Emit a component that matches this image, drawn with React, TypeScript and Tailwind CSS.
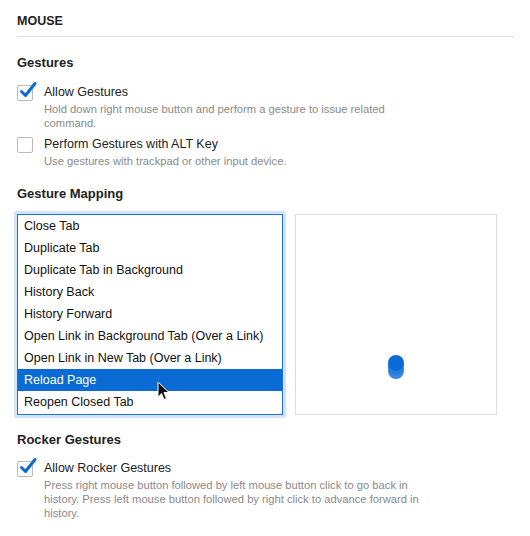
import React from "react";

const mappings = [
  "Close Tab",
  "Duplicate Tab",
  "Duplicate Tab in Background",
  "History Back",
  "History Forward",
  "Open Link in Background Tab (Over a Link)",
  "Open Link in New Tab (Over a Link)",
  "Reload Page",
  "Reopen Closed Tab",
];

function Check({ checked }: { checked: boolean }) {
  return (
    <div className="relative h-4 w-4 shrink-0 rounded-[2px] border border-[#b9b9b9] bg-white">
      {checked && (
        <svg
          className="absolute -top-[5px] left-[1px]"
          width="18"
          height="18"
          viewBox="0 0 18 18"
        >
          <path
            d="M2.5 10.5 L6.5 14.5 L16 2.5"
            fill="none"
            stroke="#0b6bd6"
            strokeWidth="3"
            strokeLinecap="round"
            strokeLinejoin="round"
          />
        </svg>
      )}
    </div>
  );
}

function Option({
  checked,
  label,
  desc,
}: {
  checked: boolean;
  label: string;
  desc: string;
}) {
  return (
    <div className="flex gap-[11px]">
      <div className="pt-[1px]">
        <Check checked={checked} />
      </div>
      <div className="flex flex-col">
        <div className="text-[12.5px] leading-[17px] text-[#222]">{label}</div>
        <div className="mt-[1px] max-w-[385px] text-[11.2px] leading-[14px] text-[#8a8a8a]">
          {desc}
        </div>
      </div>
    </div>
  );
}

export default function App() {
  return (
    <div
      className="min-h-screen bg-white px-[17px] pt-[13px] text-[#222]"
      style={{ fontFamily: '"Liberation Sans", Arial, sans-serif' }}
    >
      <div className="w-[497px] border-b border-[#dedede] pb-[7px] text-[12.5px] font-bold leading-[16px]">
        MOUSE
      </div>

      <div className="mt-[17px] text-[13px] font-semibold leading-[18px]">Gestures</div>
      <div className="mt-[12px] flex flex-col gap-[6px]">
        <Option
          checked
          label="Allow Gestures"
          desc="Hold down right mouse button and perform a gesture to issue related command."
        />
        <Option
          checked={false}
          label="Perform Gestures with ALT Key"
          desc="Use gestures with trackpad or other input device."
        />
      </div>

      <div className="mt-[17px] text-[13px] font-semibold leading-[18px]">Gesture Mapping</div>
      <div className="mt-[8px] flex items-start gap-[9px]">
        <div className="ml-[-3px] rounded-[2px] bg-[#d3e3f8] p-[3px]">
          <div className="relative w-[266px] border border-[#1a73e0] bg-white pb-[1px]">
            {mappings.map((m) => (
              <div
                key={m}
                className={
                  m === "Reload Page"
                    ? "h-[22px] bg-[#0a6bd5] px-[6px] text-[12.5px] leading-[22px] text-white"
                    : "h-[22px] px-[6px] text-[12.5px] leading-[22px] text-[#111]"
                }
              >
                {m}
              </div>
            ))}
            <svg
              className="absolute left-[139px] top-[166px]"
              width="14"
              height="21"
              viewBox="0 0 14 21"
            >
              <path
                d="M1 1 L1 16 L4.5 12.5 L7 18.5 L9.5 17.5 L7 11.5 L12 11.5 Z"
                fill="#111"
                stroke="#fff"
                strokeWidth="1"
                strokeLinejoin="round"
              />
            </svg>
          </div>
        </div>
        <div className="relative mt-[3px] h-[201px] w-[202px] border border-[#dcdcdc] bg-white">
          <div className="absolute left-[92px] top-[148px] h-[16px] w-[16px] rounded-full bg-[#3686e2]" />
          <div className="absolute left-[92px] top-[144px] h-[16px] w-[16px] rounded-full bg-[#2a7de0]" />
          <div className="absolute left-[92px] top-[140px] h-[16px] w-[16px] rounded-full bg-[#0b6bd6]" />
        </div>
      </div>

      <div className="mt-[13px] text-[13px] font-semibold leading-[18px]">Rocker Gestures</div>
      <div className="mt-[11px]">
        <Option
          checked
          label="Allow Rocker Gestures"
          desc="Press right mouse button followed by left mouse button click to go back in history. Press left mouse button followed by right click to advance forward in history."
        />
      </div>
    </div>
  );
}
